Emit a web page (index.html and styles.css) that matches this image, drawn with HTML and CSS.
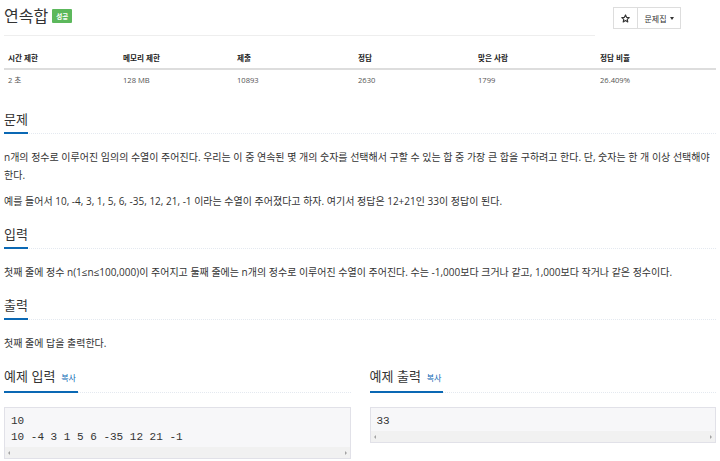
FILE: index.html
```html
<!DOCTYPE html>
<html lang="ko">
<head>
<meta charset="utf-8">
<title>연속합</title>
<link rel="stylesheet" href="styles.css">
</head>
<body>
<div class="page">
  <div class="top">
    <div class="page-header">
      <h1 class="title">연속합</h1>
      <span class="badge">성공</span>
    </div>
    <div class="btn-group">
      <span class="btn star"><svg width="9" height="9" viewBox="0 0 24 24"><path d="M12 2.5l2.9 6.4 7 .7-5.3 4.7 1.5 6.9L12 17.6l-6.1 3.6 1.5-6.9L2.1 9.6l7-.7z" fill="none" stroke="#333" stroke-width="3" stroke-linejoin="round"/></svg></span>
      <span class="btn set">문제집 <span class="caret"></span></span>
    </div>
  </div>

  <table class="info">
    <thead>
      <tr><th class="c1">시간 제한</th><th class="c2">메모리 제한</th><th class="c3">제출</th><th class="c4">정답</th><th class="c5">맞은 사람</th><th class="c6">정답 비율</th></tr>
    </thead>
    <tbody>
      <tr><td>2 초</td><td>128 MB</td><td>10893</td><td>2630</td><td>1799</td><td>26.409%</td></tr>
    </tbody>
  </table>

  <section class="sec first">
    <div class="headline"><h2>문제</h2></div>
    <div class="text">
      <p>n개의 정수로 이루어진 임의의 수열이 주어진다. 우리는 이 중 연속된 몇 개의 숫자를 선택해서 구할 수 있는 합 중 가장 큰 합을 구하려고 한다. 단, 숫자는 한 개 이상 선택해야 한다.</p>
      <p>예를 들어서 10, -4, 3, 1, 5, 6, -35, 12, 21, -1 이라는 수열이 주어졌다고 하자. 여기서 정답은 12+21인 33이 정답이 된다.</p>
    </div>
  </section>

  <section class="sec">
    <div class="headline"><h2>입력</h2></div>
    <div class="text">
      <p>첫째 줄에 정수 n(1≤n≤100,000)이 주어지고 둘째 줄에는 n개의 정수로 이루어진 수열이 주어진다. 수는 -1,000보다 크거나 같고, 1,000보다 작거나 같은 정수이다.</p>
    </div>
  </section>

  <section class="sec">
    <div class="headline"><h2>출력</h2></div>
    <div class="text">
      <p>첫째 줄에 답을 출력한다.</p>
    </div>
  </section>

  <div class="samples">
    <section class="sec">
      <div class="headline"><h2>예제 입력 <a class="copy">복사</a></h2></div>
      <div class="pre">
        <pre class="code">10
10 -4 3 1 5 6 -35 12 21 -1</pre>
        <div class="scroll"><span class="arr left"></span><span class="arr right"></span></div>
      </div>
    </section>
    <section class="sec">
      <div class="headline"><h2>예제 출력 <a class="copy">복사</a></h2></div>
      <div class="pre">
        <pre class="code">33</pre>
        <div class="scroll"><span class="arr left"></span><span class="arr right"></span></div>
      </div>
    </section>
  </div>
</div>
</body>
</html>
```

FILE: styles.css
```css
* { box-sizing: border-box; }
html, body { margin: 0; padding: 0; background: #fff; }
body {
  font-family: "Open Sans", "Noto Sans CJK KR", sans-serif;
  color: #333;
  overflow: hidden;
}
.page { padding: 0 4px; width: 720px; }

.top { display: flex; align-items: flex-start; height: 36px; }
.page-header {
  width: 591px;
  height: 36px;
  border-bottom: 1px solid #eee;
  display: flex;
  align-items: center;
  padding-bottom: 6px;
}
.title {
  margin: 0;
  font-family: "Noto Sans CJK KR", sans-serif;
  font-weight: 400;
  font-size: 16px;
  line-height: 20px;
}
.badge {
  margin-left: 4px;
  margin-top: 3px;
  background: #5cb85c;
  color: #fff;
  font-family: "Noto Sans CJK KR", sans-serif;
  font-size: 6.5px;
  font-weight: 700;
  line-height: 14px;
  height: 14px;
  padding: 0 4px;
  border-radius: 1px;
}
.btn-group { display: flex; margin-left: 18px; margin-top: 7px; }
.btn {
  display: flex;
  align-items: center;
  justify-content: center;
  height: 22px;
  border: 1px solid #ddd;
  background: #fff;
  font-family: "Noto Sans CJK KR", sans-serif;
  font-size: 8px;
  color: #333;
  white-space: nowrap;
}
.btn.star { width: 25px; }
.btn.set { margin-left: -1px; width: 44px; }
.caret {
  display: inline-block;
  margin-left: 3px;
  border-top: 3px solid #333;
  border-left: 2.5px solid transparent;
  border-right: 2.5px solid transparent;
}

.info {
  margin-top: 10px;
  width: 712px;
  border-collapse: collapse;
  table-layout: fixed;
  font-size: 7.6px;
}
.info th {
  text-align: left;
  font-family: "Noto Sans CJK KR", sans-serif;
  font-weight: 700;
  height: 23px;
  padding: 0 4px;
  border-bottom: 2px solid #ddd;
  color: #222;
}
.info td { height: 20px; padding: 0 4px; color: #555; }
.c1 { width: 115px; }
.c2 { width: 114px; }
.c3 { width: 121px; }
.c4 { width: 120px; }
.c5 { width: 122px; }
.c6 { width: 120px; }

.sec { margin-top: 11px; }
.sec.first { margin-top: 17px; }
.headline { border-bottom: 1px dotted #e4e9f0; }
.headline h2 {
  display: inline-block;
  margin: 0 0 -1px;
  font-family: "Noto Sans CJK KR", sans-serif;
  font-weight: 400;
  font-size: 13px;
  line-height: 26px;
  border-bottom: 2px solid #0a68b4;
  color: #333;
}
.copy {
  font-size: 8px;
  color: #0a68b4;
  margin-left: 2px;
  margin-right: 2px;
}
.text {
  margin-top: 14px;
  font-size: 10px;
  line-height: 18px;
}
.text p { margin: 0 0 8px; }
.text p:last-child { margin-bottom: 0; }

.samples {
  display: grid;
  grid-template-columns: 1fr 1fr;
  column-gap: 19px;
}
.pre {
  margin-top: 14px;
  border: 1px solid #e1e1e8;
  background: #f7f7f9;
}
.code {
  margin: 0;
  padding: 5px 6px 2px;
  font-family: "Liberation Mono", monospace;
  font-size: 11px;
  line-height: 16px;
  color: #333;
}
.scroll {
  height: 11px;
  background: #f1f1f1;
  display: flex;
  justify-content: space-between;
  align-items: center;
  padding: 0 3px;
}
.arr { width: 0; height: 0; border-top: 2px solid transparent; border-bottom: 2px solid transparent; }
.arr.left { border-right: 2px solid #a3a3a3; }
.arr.right { border-left: 2px solid #a3a3a3; }
```
